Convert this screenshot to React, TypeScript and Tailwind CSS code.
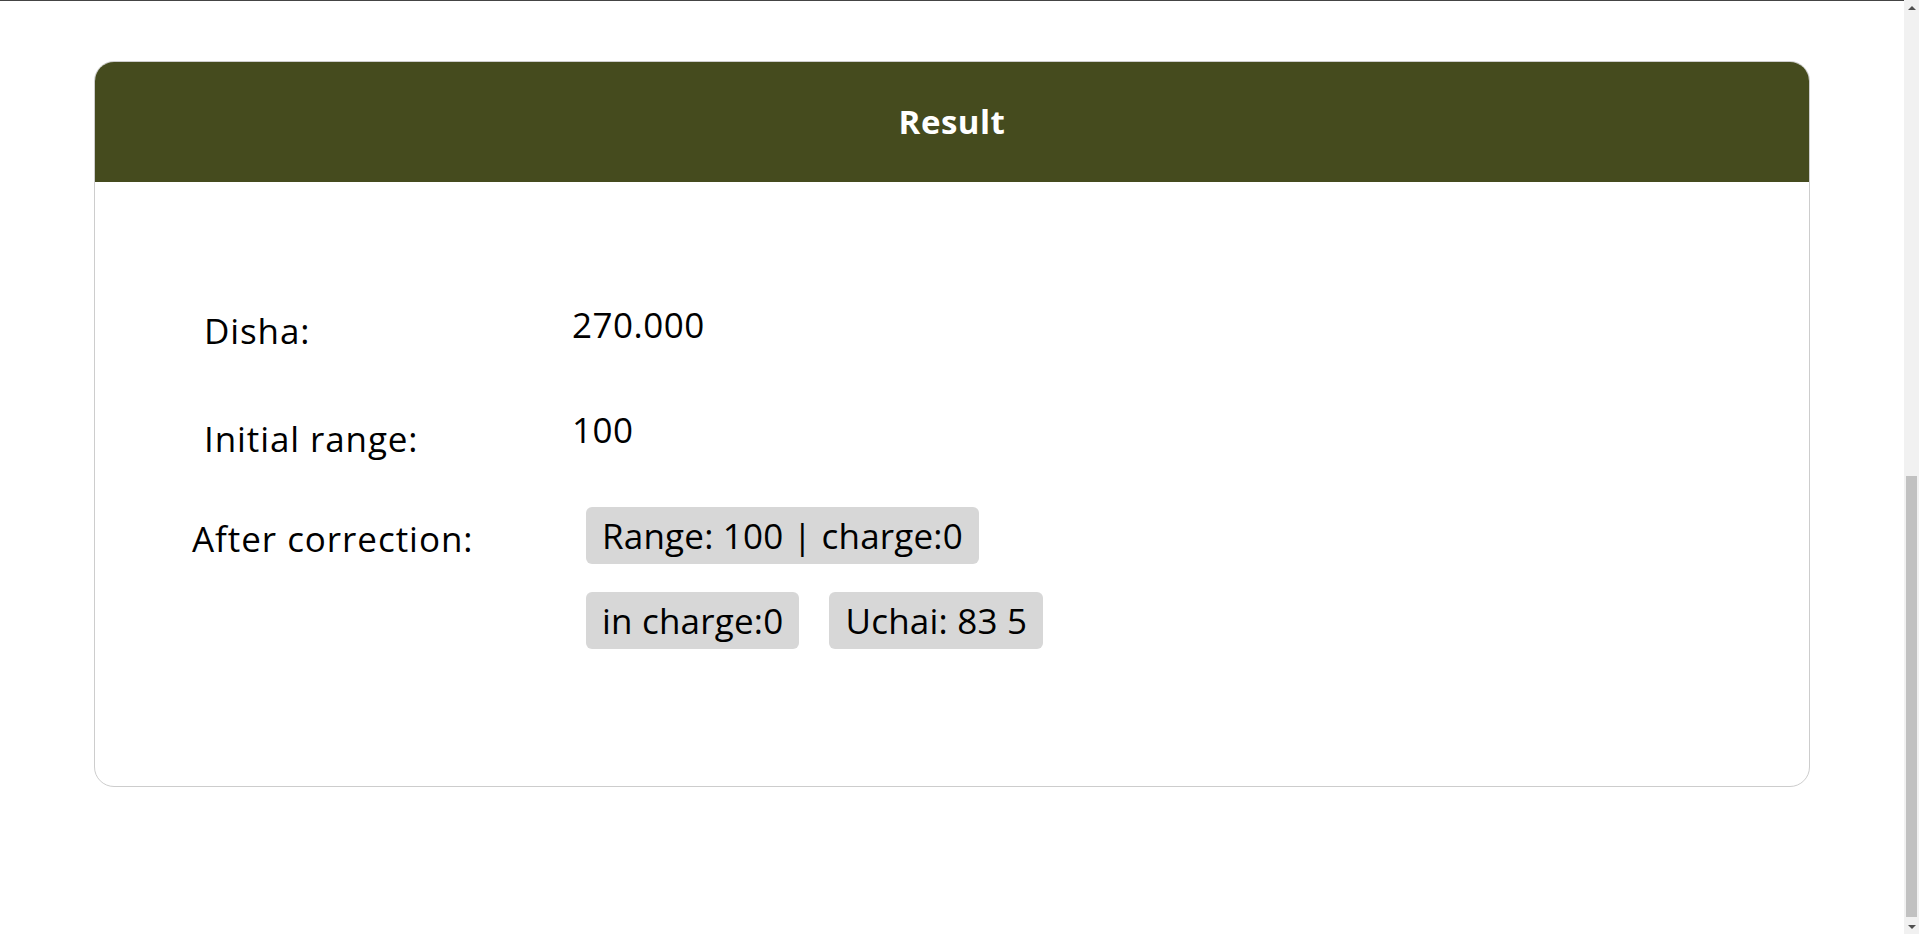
const corrections = [
  ["in charge:0", "Uchai: 83 5"],
];

const Badge = ({ children }: { children: React.ReactNode }) => (
  <span className="inline-block bg-[#d7d7d7] rounded-[6px] px-4 py-2 leading-[41px] tracking-[0.2px] whitespace-nowrap">
    {children}
  </span>
);

// page scrollbar, scrolled to the bottom
const ScrollTrack = () => (
  <aside className="w-[15px] shrink-0 bg-[#f1f1f1] flex flex-col items-center">
    <div className="h-[15px] flex items-center justify-center">
      <div className="w-0 h-0 border-x-[4px] border-x-transparent border-b-[4px] border-b-[#505050]" />
    </div>
    <div className="flex-1" />
    <div className="h-[441px] w-[11px] bg-[#c1c1c1] mb-[2px]" />
    <div className="h-[15px] flex items-center justify-center">
      <div className="w-0 h-0 border-x-[4px] border-x-transparent border-t-[4px] border-t-[#505050]" />
    </div>
  </aside>
);

export default function App() {
  return (
    <div className="h-screen flex bg-white text-black font-['Open_Sans','Noto_Sans',sans-serif]">
      <main className="flex-1 min-w-0 overflow-y-auto flex flex-col-reverse">
        <div className="shrink-0">
          {/* upper part of the page, scrolled out of view */}
          <div className="h-[984px] border-b border-[#444]" />

          <div className="pt-[60px] pb-[147px]">
            <section className="mx-[94px] border border-[#cdcdcd] rounded-[20px] overflow-hidden">
              <div className="h-[120px] bg-[#454b1e] flex items-center justify-center text-white font-bold text-[33px] tracking-[0.5px]">
                Result
              </div>

              <div className="pt-[122px] pb-[137px] text-[35px] leading-[42px] tracking-[0.5px]">
                <div className="flex items-start pl-[109px]">
                  <div className="w-[368px] mt-[6px] tracking-[0.9px]">Disha:</div>
                  <div>270.000</div>
                </div>

                <div className="flex items-start pl-[109px] mt-[57px]">
                  <div className="w-[368px] mt-[9px] tracking-[0.9px]">Initial range:</div>
                  <div>100</div>
                </div>

                <div className="flex items-start pl-[97px] mt-[47px]">
                  <div className="w-[394px] mt-[11px] tracking-[0.95px]">After correction:</div>
                  <div className="flex flex-col items-start gap-[28px]">
                    <Badge>Range: 100 | charge:0</Badge>
                    {corrections.map((row, i) => (
                      <div key={i} className="flex gap-[30px]">
                        {row.map((item) => (
                          <Badge key={item}>{item}</Badge>
                        ))}
                      </div>
                    ))}
                  </div>
                </div>
              </div>
            </section>
          </div>
        </div>
      </main>
      <ScrollTrack />
    </div>
  );
}
